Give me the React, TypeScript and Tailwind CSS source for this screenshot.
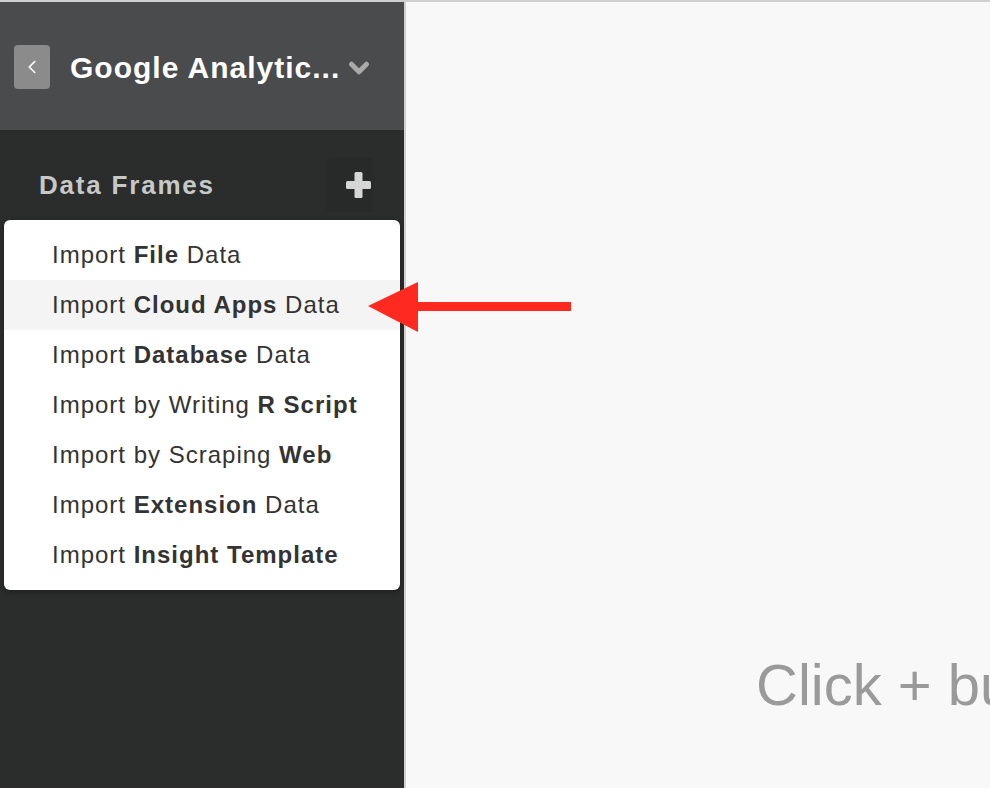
import { ChevronLeft, ChevronDown } from 'lucide-react';

const ITEMS: { pre: string; bold: string; post: string }[] = [
  { pre: 'Import ', bold: 'File', post: ' Data' },
  { pre: 'Import ', bold: 'Cloud Apps', post: ' Data' },
  { pre: 'Import ', bold: 'Database', post: ' Data' },
  { pre: 'Import by Writing ', bold: 'R Script', post: '' },
  { pre: 'Import by Scraping ', bold: 'Web', post: '' },
  { pre: 'Import ', bold: 'Extension', post: ' Data' },
  { pre: 'Import ', bold: 'Insight Template', post: '' },
];

export default function App() {
  return (
    <div className="relative w-[990px] h-[788px] overflow-hidden flex flex-col bg-[#f8f8f8] font-['Liberation_Sans',Arial,sans-serif]">
      <div className="h-[2px] bg-[#cfcfcf] shrink-0" />
      <div className="flex flex-1 min-h-0">
        {/* Sidebar */}
        <div className="w-[404px] shrink-0 flex flex-col bg-[#2b2d2d]">
          <div className="h-[128px] bg-[#4a4b4d] flex items-center pl-[14px] pt-[2px]">
            <button className="w-[36px] h-[44px] shrink-0 rounded-[4px] bg-[#8b8b8b] flex items-center justify-center text-white">
              <ChevronLeft size={22} strokeWidth={1.75} />
            </button>
            <span className="ml-[20px] whitespace-nowrap text-white font-bold text-[30px] tracking-[1px]">Google Analytic...</span>
            <ChevronDown size={30} strokeWidth={4} className="shrink-0 ml-[4px] mt-[2px] text-[#a9a9a9]" />
          </div>

          <div className="relative flex-1">
            <div className="flex items-center justify-between pl-[39px] pr-[31px] pt-[28px]">
              <span className="text-[26px] font-bold text-[#c7c8c8] tracking-[1.8px]">Data Frames</span>
              <div className="w-[47px] h-[54px] rounded-[4px] bg-[#282a2a] flex items-center justify-end pr-[2px]">
                <svg width="25" height="26" viewBox="0 0 25 26">
                  <rect x="8.5" y="0" width="8" height="26" rx="1.5" fill="#d6d6d6" />
                  <rect x="0" y="9" width="25" height="8" rx="1.5" fill="#d6d6d6" />
                </svg>
              </div>
            </div>

            {/* Dropdown menu */}
            <div className="absolute left-[4px] top-[90px] w-[396px] bg-white rounded-[6px] py-[10px] shadow-[0_2px_6px_rgba(0,0,0,0.3)]">
              {ITEMS.map((it, i) => (
                <div
                  key={i}
                  className={`h-[50px] flex items-center pl-[48px] text-[24px] tracking-[1px] text-[#333333] ${i === 1 ? 'bg-[#f4f4f4]' : ''}`}
                >
                  <span className="whitespace-pre">
                    {it.pre}
                    <b className="font-bold">{it.bold}</b>
                    {it.post}
                  </span>
                </div>
              ))}
            </div>
          </div>
        </div>

        {/* Main area */}
        <div className="relative flex-1 overflow-hidden border-l-2 border-[#d0d0d0] bg-[#f8f8f8]">
          <div className="absolute left-[350px] top-[654px] whitespace-nowrap leading-none text-[58px] text-[#9a9a9a]">
            Click + button to add a Data Frame
          </div>
        </div>
      </div>

      {/* Red annotation arrow */}
      <svg className="absolute left-[366px] top-[280px]" width="208" height="54" viewBox="0 0 208 54">
        <polygon points="2,26 52,2 52,22 205,22 205,31 52,31 52,52" fill="#ff2a1f" />
      </svg>
    </div>
  );
}
